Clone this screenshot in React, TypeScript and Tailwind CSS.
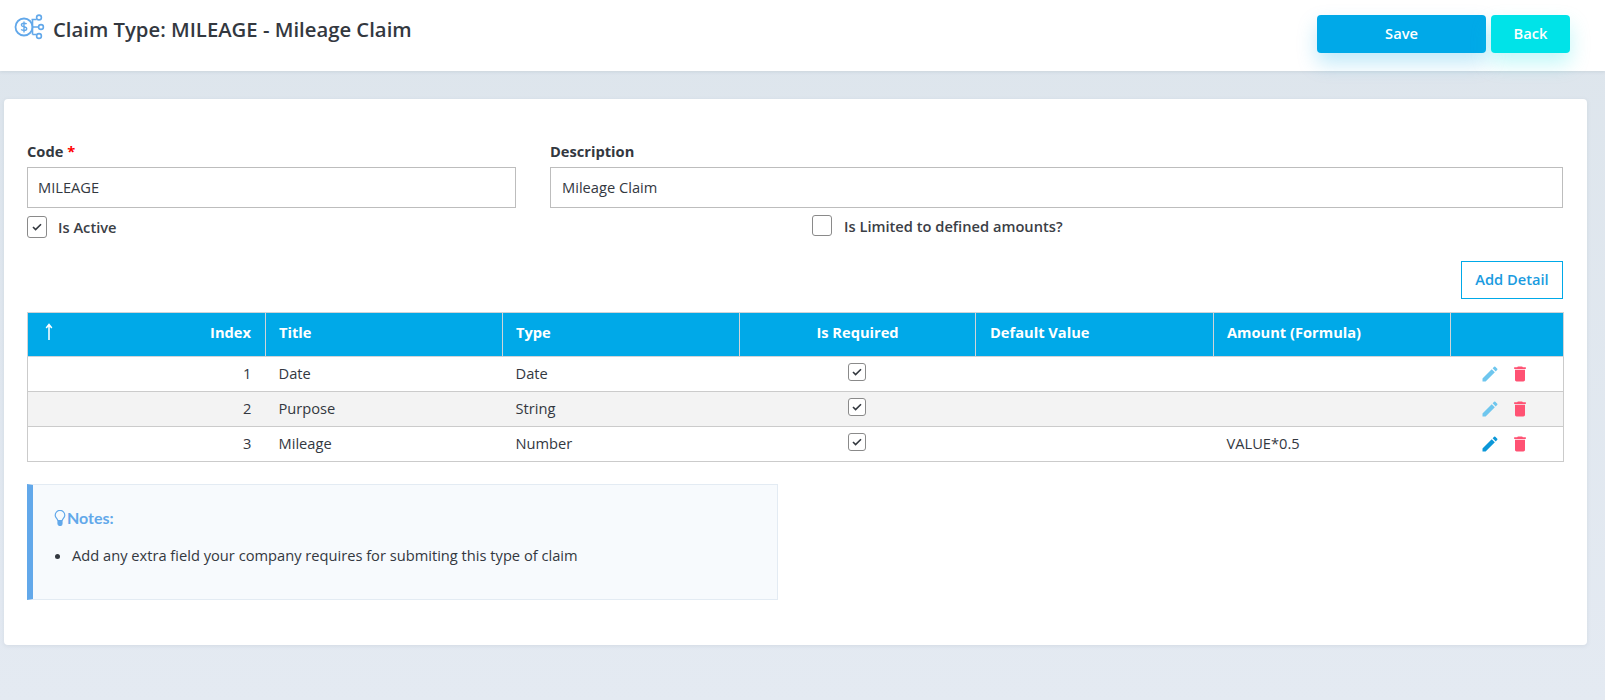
import React from "react";
import { MdEdit, MdDelete } from "react-icons/md";

function Check({ checked = true, big = false }: { checked?: boolean; big?: boolean }) {
  return (
    <span className={`inline-flex items-center justify-center bg-white border border-[#8a8a8a] rounded-[3px] ${big ? "w-[20px] h-[22px]" : "w-[18px] h-[18px]"}`}>
      {checked && (
        <svg width="10" height="8" viewBox="0 0 10 8" fill="none">
          <path d="M1 4l2.6 2.6L9 1.2" stroke="#33383f" strokeWidth="1.6" />
        </svg>
      )}
    </span>
  );
}

function HeaderIcon() {
  return (
    <svg width="31" height="27" viewBox="0 0 31 27" fill="none" stroke="#62a8ea" strokeWidth="1.6">
      <circle cx="10" cy="14" r="8.5" strokeWidth="1.8" />
      <path d="M12.600 11c-.8-1-5.200-1.400-5.200.9 0 2.500 5.300 1.200 5.300 3.800 0 2.200-4.500 2-5.500.7M10 8.500v11" strokeWidth="1.400" />
      <path d="M19 14h5M19 6.500h-1.500M18.500 6.500v15M18.500 6.500h4M18.500 21.500h4" />
      <circle cx="25" cy="4.500" r="2.400" />
      <circle cx="27" cy="14" r="2.400" />
      <circle cx="25" cy="23" r="2.400" />
    </svg>
  );
}

const headers = [
  { t: "Index", w: "w-[238px]", cls: "text-right pr-[14px]" },
  { t: "Title", w: "w-[237px]", cls: "text-left pl-[13px]" },
  { t: "Type", w: "w-[237px]", cls: "text-left pl-[13px]" },
  { t: "Is Required", w: "w-[236px]", cls: "text-center" },
  { t: "Default Value", w: "w-[238px]", cls: "text-left pl-[14px]" },
  { t: "Amount (Formula)", w: "w-[237px]", cls: "text-left pl-[13px]" },
  { t: "", w: "w-[113px]", cls: "" },
];

const rows = [
  { i: 1, title: "Date", type: "Date", amount: "", faded: true },
  { i: 2, title: "Purpose", type: "String", amount: "", faded: true },
  { i: 3, title: "Mileage", type: "Number", amount: "VALUE*0.5", faded: false },
];

export default function App() {
  return (
    <div className="min-h-[700px] bg-linear-to-b from-[#dde5ec] to-[#e4eaf2] text-[#33383f] text-[14.66px] font-['Open_Sans',sans-serif]">
      <header className="h-[71px] bg-white flex justify-between pl-[14px] pr-[35px] shadow-[0_1px_3px_rgba(90,110,130,0.15)]">
        <div className="flex items-start pt-[13px] gap-[8px]">
          <HeaderIcon />
          <h1 className="text-[20.3px] leading-[30px] font-semibold text-[#33383f] mt-[1px]">Claim Type: MILEAGE - Mileage Claim</h1>
        </div>
        <div className="flex items-start pt-[15px] gap-[5px]">
          <button className="w-[169px] h-[38px] rounded-[4px] bg-[#00a9e8] text-white font-semibold shadow-[0_10px_20px_rgba(0,169,232,0.25)]">Save</button>
          <button className="w-[79px] h-[38px] rounded-[4px] bg-[#00e3e8] text-white font-semibold shadow-[0_10px_20px_rgba(0,227,232,0.25)]">Back</button>
        </div>
      </header>

      <main className="mt-[28px] ml-[4px] w-[1583px] h-[546px] bg-white rounded-[4px] px-[23px] pt-[41px] shadow-[0_1px_4px_rgba(90,110,130,0.12)]">
        <div className="flex gap-[34px]">
          <div className="w-[489px]">
            <label className="block font-bold leading-[20px] h-[27px] pt-[1px]">Code <span className="text-[#ff0000]">*</span></label>
            <div className="h-[41px] border border-[#bdbdbd] flex items-center px-[10px]">MILEAGE</div>
          </div>
          <div className="w-[1013px]">
            <label className="block font-bold leading-[20px] h-[27px] pt-[1px]">Description</label>
            <div className="h-[41px] border border-[#bdbdbd] flex items-center px-[11px]">Mileage Claim</div>
          </div>
        </div>

        <div className="flex h-[53px] pt-[8px]">
          <div className="w-[785px] flex items-start gap-[11px]">
            <Check big />
            <span className="leading-[22px] font-semibold text-[#3b4046]">Is Active</span>
          </div>
          <div className="flex items-start gap-[12px] -mt-[1px]">
            <span className="inline-block w-[20px] h-[21px] border border-[#8a8a8a] rounded-[3px]" />
            <span className="leading-[22px] font-semibold text-[#3b4046]">Is Limited to defined amounts?</span>
          </div>
        </div>

        <div className="flex justify-end pr-[1px]">
          <button className="w-[102px] h-[38px] border border-[#00a9e8] text-[#1a9be0] font-semibold">Add Detail</button>
        </div>

        <table className="mt-[13px] w-[1537px] table-fixed border-collapse">
          <thead>
            <tr className="h-[44px] bg-[#00a9e8] text-white">
              {headers.map((h, idx) => (
                <th key={idx} className={`${h.w} ${h.cls} relative font-bold border border-[#cfd4d8] align-middle pb-[3px]`}>
                  {idx === 0 && (
                    <svg className="absolute left-[17px] top-[10px]" width="8" height="18" viewBox="0 0 8 18" fill="none" stroke="#fff" strokeWidth="1.500">
                      <path d="M4 17V2M1.200 5L4 1.500 6.800 5" />
                    </svg>
                  )}
                  {h.t}
                </th>
              ))}
            </tr>
          </thead>
          <tbody>
            {rows.map((r, idx) => (
              <tr key={r.i} className={`h-[35px] border border-[#cbcbcb] ${idx === 1 ? "bg-[#f3f3f3]" : "bg-white"}`}>
                <td className="px-[14px] text-right">{r.i}</td>
                <td className="px-[13px]">{r.title}</td>
                <td className="px-[13px]">{r.type}</td>
                <td className="text-center"><span className="inline-flex -mt-[6px] -ml-[2px] align-middle"><Check /></span></td>
                <td className="px-[12px]"></td>
                <td className="px-[13px]">{r.amount}</td>
                <td className="pl-[29px]">
                  <div className="flex items-center gap-[10px] -mt-[1px]">
                    <MdEdit size={20} className={r.faded ? "text-[#6ec6ee]" : "text-[#0b97d8]"} />
                    <MdDelete size={20} className="text-[#ff5273]" />
                  </div>
                </td>
              </tr>
            ))}
          </tbody>
        </table>

        <aside className="mt-[22px] w-[751px] h-[116px] bg-[#f7fafd] border border-[#e3ebf3] border-l-[6px] border-l-[#62a8ea] pl-[21px] pt-[21px]">
          <div className="flex items-center gap-[1px] text-[#62a8ea] font-['Lato',sans-serif] font-bold text-[16px] leading-[24px]">
            <svg width="12" height="16" viewBox="0 0 12 16" fill="none" stroke="#62a8ea" strokeWidth="1.200">
              <path d="M3.800 10.500C3.500 8.500 1.200 7.800 1.200 5.200a4.800 4.800 0 0 1 9.600 0c0 2.600-2.300 3.300-2.600 5.300z" />
              <path d="M4 11.500h4v2a2 2 0 0 1-4 0z" fill="#62a8ea" />
            </svg>
            Notes:
          </div>
          <ul className="mt-[12px] list-disc pl-[18px] leading-[26px]">
            <li>Add any extra field your company requires for submiting this type of claim</li>
          </ul>
        </aside>
      </main>
    </div>
  );
}
